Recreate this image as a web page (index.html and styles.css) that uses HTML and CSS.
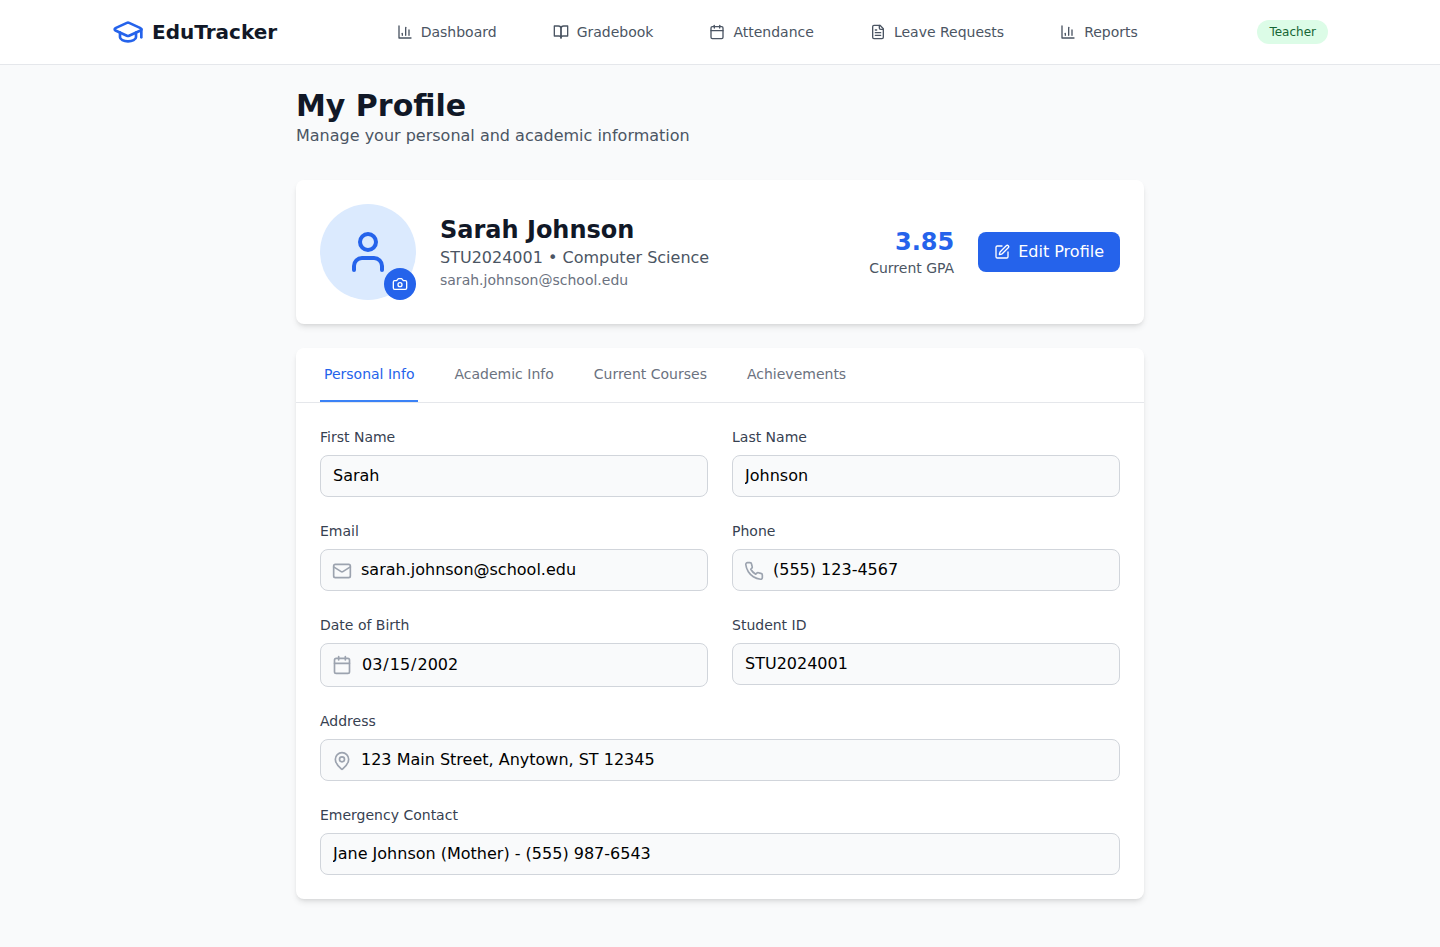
FILE: index.html
```html
<!DOCTYPE html>
<html lang="en">
<head>
<meta charset="utf-8">
<meta name="viewport" content="width=device-width, initial-scale=1">
<title>EduTracker - My Profile</title>
<link rel="stylesheet" href="styles.css">
</head>
<body>
<header class="header">
  <div class="header-inner">
    <a class="brand">
      <svg class="icon icon-xl" viewBox="0 0 24 24"><path d="M21.42 10.922a1 1 0 0 0-.019-1.838L12.83 5.18a2 2 0 0 0-1.66 0L2.6 9.08a1 1 0 0 0 0 1.832l8.57 3.908a2 2 0 0 0 1.66 0z"/><path d="M22 10v6"/><path d="M6 12.5V16a6 3 0 0 0 12 0v-3.5"/></svg>
      <span class="brand-name">EduTracker</span>
    </a>
    <nav class="nav">
      <a class="nav-link"><svg class="icon" viewBox="0 0 24 24"><path d="M3 3v18h18"/><path d="M18 17V9"/><path d="M13 17V5"/><path d="M8 17v-3"/></svg>Dashboard</a>
      <a class="nav-link"><svg class="icon" viewBox="0 0 24 24"><path d="M2 3h6a4 4 0 0 1 4 4v14a3 3 0 0 0-3-3H2z"/><path d="M22 3h-6a4 4 0 0 0-4 4v14a3 3 0 0 1 3-3h7z"/></svg>Gradebook</a>
      <a class="nav-link"><svg class="icon" viewBox="0 0 24 24"><path d="M8 2v4"/><path d="M16 2v4"/><rect width="18" height="18" x="3" y="4" rx="2"/><path d="M3 10h18"/></svg>Attendance</a>
      <a class="nav-link"><svg class="icon" viewBox="0 0 24 24"><path d="M15 2H6a2 2 0 0 0-2 2v16a2 2 0 0 0 2 2h12a2 2 0 0 0 2-2V7Z"/><path d="M14 2v4a2 2 0 0 0 2 2h4"/><path d="M10 9H8"/><path d="M16 13H8"/><path d="M16 17H8"/></svg>Leave Requests</a>
      <a class="nav-link"><svg class="icon" viewBox="0 0 24 24"><path d="M3 3v18h18"/><path d="M18 17V9"/><path d="M13 17V5"/><path d="M8 17v-3"/></svg>Reports</a>
    </nav>
    <span class="role">Teacher</span>
  </div>
</header>

<main class="page">
  <div class="page-head">
    <h1 class="page-title">My Profile</h1>
    <p class="page-subtitle">Manage your personal and academic information</p>
  </div>

  <section class="card profile">
    <div class="avatar">
      <svg class="icon icon-2xl" viewBox="0 0 24 24"><path d="M19 21v-2a4 4 0 0 0-4-4H9a4 4 0 0 0-4 4v2"/><circle cx="12" cy="7" r="4"/></svg>
      <button class="avatar-edit" aria-label="Change photo"><svg class="icon" viewBox="0 0 24 24"><path d="M14.5 4h-5L7 7H4a2 2 0 0 0-2 2v9a2 2 0 0 0 2 2h16a2 2 0 0 0 2-2V9a2 2 0 0 0-2-2h-3l-2.500-3z"/><circle cx="12" cy="13" r="3"/></svg></button>
    </div>
    <div class="identity">
      <h2 class="name">Sarah Johnson</h2>
      <p class="program">STU2024001 • Computer Science</p>
      <p class="email">sarah.johnson@school.edu</p>
    </div>
    <div class="gpa">
      <div class="gpa-value">3.85</div>
      <div class="gpa-label">Current GPA</div>
    </div>
    <button class="button"><svg class="icon" viewBox="0 0 24 24"><path d="M12 3H5a2 2 0 0 0-2 2v14a2 2 0 0 0 2 2h14a2 2 0 0 0 2-2v-7"/><path d="M18.375 2.625a1 1 0 0 1 3 3l-9.013 9.014a2 2 0 0 1-.853.505l-2.873.84a.5.5 0 0 1-.62-.62l.84-2.873a2 2 0 0 1 .506-.852z"/></svg>Edit Profile</button>
  </section>

  <section class="card">
    <nav class="tabs">
      <button class="tab tab-active">Personal Info</button>
      <button class="tab">Academic Info</button>
      <button class="tab">Current Courses</button>
      <button class="tab">Achievements</button>
    </nav>
    <form class="form">
      <div class="field">
        <label class="label" for="first">First Name</label>
        <div class="control"><input class="input" id="first" type="text" value="Sarah" disabled></div>
      </div>
      <div class="field">
        <label class="label" for="last">Last Name</label>
        <div class="control"><input class="input" id="last" type="text" value="Johnson" disabled></div>
      </div>
      <div class="field">
        <label class="label" for="email">Email</label>
        <div class="control">
          <svg class="icon icon-field" viewBox="0 0 24 24"><rect width="20" height="16" x="2" y="4" rx="2"/><path d="m22 7-8.970 5.700a1.940 1.940 0 0 1-2.060 0L2 7"/></svg>
          <input class="input input-icon" id="email" type="email" value="sarah.johnson@school.edu" disabled>
        </div>
      </div>
      <div class="field">
        <label class="label" for="phone">Phone</label>
        <div class="control">
          <svg class="icon icon-field" viewBox="0 0 24 24"><path d="M22 16.920v3a2 2 0 0 1-2.180 2 19.790 19.790 0 0 1-8.630-3.070 19.500 19.500 0 0 1-6-6 19.790 19.790 0 0 1-3.070-8.670A2 2 0 0 1 4.110 2h3a2 2 0 0 1 2 1.720 12.840 12.840 0 0 0 .7 2.810 2 2 0 0 1-.45 2.110L8.090 9.910a16 16 0 0 0 6 6l1.270-1.270a2 2 0 0 1 2.110-.45 12.840 12.840 0 0 0 2.810.7A2 2 0 0 1 22 16.920z"/></svg>
          <input class="input input-icon" id="phone" type="tel" value="(555) 123-4567" disabled>
        </div>
      </div>
      <div class="field">
        <label class="label" for="dob">Date of Birth</label>
        <div class="control">
          <svg class="icon icon-field" viewBox="0 0 24 24"><path d="M8 2v4"/><path d="M16 2v4"/><rect width="18" height="18" x="3" y="4" rx="2"/><path d="M3 10h18"/></svg>
          <input class="input input-icon" id="dob" type="date" value="2002-03-15" disabled>
        </div>
      </div>
      <div class="field">
        <label class="label" for="sid">Student ID</label>
        <div class="control"><input class="input" id="sid" type="text" value="STU2024001" disabled></div>
      </div>
      <div class="field field-wide">
        <label class="label" for="address">Address</label>
        <div class="control">
          <svg class="icon icon-field" viewBox="0 0 24 24"><path d="M20 10c0 4.993-5.539 10.193-7.399 11.799a1 1 0 0 1-1.202 0C9.539 20.193 4 14.993 4 10a8 8 0 0 1 16 0"/><circle cx="12" cy="10" r="3"/></svg>
          <input class="input input-icon" id="address" type="text" value="123 Main Street, Anytown, ST 12345" disabled>
        </div>
      </div>
      <div class="field field-wide">
        <label class="label" for="emergency">Emergency Contact</label>
        <div class="control"><input class="input" id="emergency" type="text" value="Jane Johnson (Mother) - (555) 987-6543" disabled></div>
      </div>
    </form>
  </section>
</main>
</body>
</html>
```

FILE: styles.css
```css
*, *::before, *::after { box-sizing: border-box; }

body {
  margin: 0;
  min-height: 100vh;
  background: #f9fafb;
  color: #000;
  font-family: "DejaVu Sans", sans-serif;
  font-size: 16px;
  line-height: 24px;
}

h1, h2, p { margin: 0; }

button, input {
  margin: 0;
  padding: 0;
  border: 0;
  background: transparent;
  color: inherit;
  font: inherit;
}

.icon {
  display: block;
  flex: none;
  width: 16px;
  height: 16px;
  fill: none;
  stroke: currentColor;
  stroke-width: 2;
  stroke-linecap: round;
  stroke-linejoin: round;
}
.icon-xl { width: 32px; height: 32px; }
.icon-2xl { width: 48px; height: 48px; }

.header {
  background: #fff;
  border-bottom: 1px solid #e5e7eb;
}
.header-inner {
  display: flex;
  align-items: center;
  justify-content: space-between;
  max-width: 1280px;
  height: 64px;
  margin: 0 auto;
  padding: 0 32px;
}
.brand {
  display: flex;
  align-items: center;
  gap: 8px;
  color: #2563eb;
}
.brand-name {
  color: #111827;
  font-size: 20px;
  font-weight: 700;
  line-height: 28px;
}
.nav { display: flex; gap: 32px; }
.nav-link {
  display: flex;
  align-items: center;
  gap: 8px;
  padding: 8px 12px;
  color: #4b5563;
  font-size: 14px;
  line-height: 20px;
}
.role {
  padding: 4px 12px;
  border-radius: 999px;
  background: #dcfce7;
  color: #166534;
  font-size: 12px;
  line-height: 16px;
}

.page {
  max-width: 848px;
  margin: 0 auto;
  padding: 23px 0 48px;
}
.page-head { margin-bottom: 32px; }
.page-title {
  color: #111827;
  font-size: 30px;
  font-weight: 700;
  line-height: 36px;
}
.page-subtitle { color: #4b5563; }

.card {
  border-radius: 8px;
  background: #fff;
  box-shadow: 0 4px 6px -1px rgba(0, 0, 0, 0.1), 0 2px 4px -2px rgba(0, 0, 0, 0.1);
}

.profile {
  display: flex;
  align-items: center;
  gap: 24px;
  margin-bottom: 24px;
  padding: 24px;
}
.avatar {
  position: relative;
  display: flex;
  align-items: center;
  justify-content: center;
  width: 96px;
  height: 96px;
  border-radius: 50%;
  background: #dbeafe;
  color: #2563eb;
}
.avatar-edit {
  position: absolute;
  right: 0;
  bottom: 0;
  padding: 8px;
  border-radius: 50%;
  background: #2563eb;
  color: #fff;
}
.identity { flex: 1; }
.name {
  color: #111827;
  font-size: 24px;
  font-weight: 700;
  line-height: 32px;
}
.program { color: #4b5563; }
.email {
  color: #6b7280;
  font-size: 14px;
  line-height: 20px;
}
.gpa { text-align: right; }
.gpa-value {
  color: #2563eb;
  font-size: 24px;
  font-weight: 700;
  line-height: 32px;
}
.gpa-label {
  color: #4b5563;
  font-size: 14px;
  line-height: 20px;
}
.button {
  display: flex;
  align-items: center;
  gap: 8px;
  padding: 8px 16px;
  border-radius: 8px;
  background: #2563eb;
  color: #fff;
}

.tabs {
  display: flex;
  gap: 32px;
  padding: 0 24px;
  border-bottom: 1px solid #e5e7eb;
}
.tab {
  padding: 16px 4px;
  border-bottom: 2px solid transparent;
  color: #6b7280;
  font-size: 14px;
  line-height: 20px;
}
.tab-active {
  border-bottom-color: #3b82f6;
  color: #2563eb;
}

.form {
  display: grid;
  grid-template-columns: 1fr 1fr;
  gap: 24px;
  padding: 24px;
}
.field-wide { grid-column: 1 / -1; }
.label {
  display: block;
  margin-bottom: 8px;
  color: #374151;
  font-size: 14px;
  line-height: 20px;
}
.control { position: relative; }
.icon-field {
  position: absolute;
  top: 12px;
  left: 12px;
  width: 20px;
  height: 20px;
  color: #9ca3af;
}
.input {
  display: block;
  width: 100%;
  padding: 8px 12px;
  border: 1px solid #d1d5db;
  border-radius: 8px;
  background: #f9fafb;
  color: #000;
}
.input-icon { padding-left: 40px; }
```
